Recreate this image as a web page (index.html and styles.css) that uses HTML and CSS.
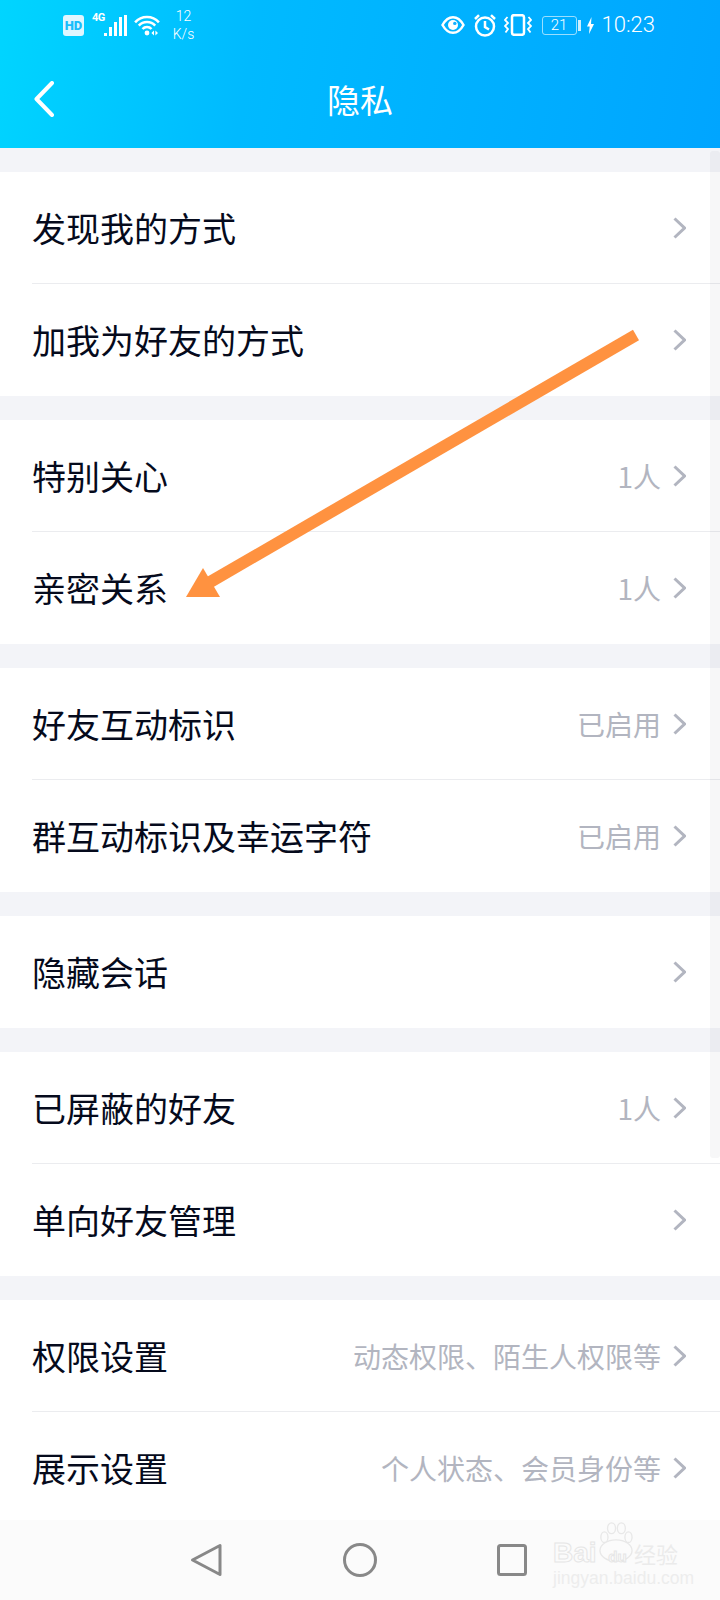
FILE: index.html
```html
<!DOCTYPE html>
<html lang="zh-CN">
<head>
  <meta charset="UTF-8">
  <title>隐私</title>
  <link rel="stylesheet" href="styles.css">
</head>
<body>
<div class="screen">

  <header class="top">
    <div class="status">
      <div class="status-left">
        <span class="hd">HD</span>
        <span class="net">4G</span>
        <svg class="signal" viewBox="0 0 23 21" width="23" height="21">
          <rect x="0" y="18" width="3" height="3"/>
          <rect x="5" y="12" width="3" height="9"/>
          <rect x="10" y="7" width="3" height="14"/>
          <rect x="15" y="2" width="3" height="19"/>
          <rect x="20" y="0" width="3" height="21"/>
        </svg>
        <svg class="wifi" viewBox="0 0 26 22" width="26" height="22">
          <path d="M1.1 8.3A16 16 0 0 1 24.9 8.3"/>
          <path d="M4.8 11.6A11 11 0 0 1 21.2 11.6"/>
          <path d="M8.5 15A6 6 0 0 1 17.5 15"/>
          <circle class="solid" cx="13" cy="19" r="2.4"/>
          <path class="solid" d="M20 16.5v5l-2.6-2.5zM21.4 16.5v5l2.6-2.5z"/>
        </svg>
        <span class="speed"><span>12</span><span>K/s</span></span>
      </div>
      <div class="status-right">
        <svg class="eye" viewBox="0 0 24 20" width="24" height="20">
          <path d="M1.5 10C4.5 4.6 8 2.2 12 2.2S19.500 4.600 22.500 10C19.500 15.400 16 17.800 12 17.800S4.500 15.400 1.500 10Z"/>
          <circle class="solid" cx="12" cy="10" r="5"/>
          <circle class="hole" cx="13.800" cy="8.400" r="1.700"/>
        </svg>
        <svg class="alarm" viewBox="0 0 24 24" width="24" height="24">
          <circle cx="12" cy="13.500" r="9"/>
          <path d="M12 8v6l4 2.500"/>
          <path d="M2 6 6 2.200M22 6 18 2.200"/>
        </svg>
        <svg class="vibrate" viewBox="0 0 28 22" width="28" height="22">
          <rect x="8" y="1.200" width="12" height="19.600" rx="2"/>
          <path class="thin" d="M3.500 3 1 6l3 3-3 3 3 3-2.500 3.500"/>
          <path class="thin" d="M24.500 3 27 6l-3 3 3 3-3 3 2.500 3.500"/>
        </svg>
        <span class="battery">21</span>
        <span class="battery-nub"></span>
        <svg class="bolt" viewBox="0 0 7 17" width="7" height="17">
          <path class="solid" d="M4.500 0 0 9.500h2.700L2 17l5-10H4z"/>
        </svg>
        <span class="clock">10:23</span>
      </div>
    </div>
    <div class="titlebar">
      <svg class="back" viewBox="0 0 20 36" width="20" height="36">
        <path d="M18 2 2.500 18 18 34"/>
      </svg>
      <h1>隐私</h1>
    </div>
  </header>

  <main class="list">
    <section class="group">
      <div class="row"><span class="label">发现我的方式</span><svg class="chev" viewBox="0 0 13 22"><path d="M1.500 1.500 11.500 11 1.500 20.500"/></svg></div>
      <div class="row"><span class="label">加我为好友的方式</span><svg class="chev" viewBox="0 0 13 22"><path d="M1.500 1.500 11.500 11 1.500 20.500"/></svg></div>
    </section>
    <section class="group">
      <div class="row"><span class="label">特别关心</span><span class="value">1人</span><svg class="chev" viewBox="0 0 13 22"><path d="M1.500 1.500 11.500 11 1.500 20.500"/></svg></div>
      <div class="row"><span class="label">亲密关系</span><span class="value">1人</span><svg class="chev" viewBox="0 0 13 22"><path d="M1.500 1.500 11.500 11 1.500 20.500"/></svg></div>
    </section>
    <section class="group">
      <div class="row"><span class="label">好友互动标识</span><span class="value">已启用</span><svg class="chev" viewBox="0 0 13 22"><path d="M1.500 1.500 11.500 11 1.500 20.500"/></svg></div>
      <div class="row"><span class="label">群互动标识及幸运字符</span><span class="value">已启用</span><svg class="chev" viewBox="0 0 13 22"><path d="M1.500 1.500 11.500 11 1.500 20.500"/></svg></div>
    </section>
    <section class="group">
      <div class="row"><span class="label">隐藏会话</span><svg class="chev" viewBox="0 0 13 22"><path d="M1.500 1.500 11.500 11 1.500 20.500"/></svg></div>
    </section>
    <section class="group">
      <div class="row"><span class="label">已屏蔽的好友</span><span class="value">1人</span><svg class="chev" viewBox="0 0 13 22"><path d="M1.500 1.500 11.500 11 1.500 20.500"/></svg></div>
      <div class="row"><span class="label">单向好友管理</span><svg class="chev" viewBox="0 0 13 22"><path d="M1.500 1.500 11.500 11 1.500 20.500"/></svg></div>
    </section>
    <section class="group">
      <div class="row"><span class="label">权限设置</span><span class="value">动态权限、陌生人权限等</span><svg class="chev" viewBox="0 0 13 22"><path d="M1.500 1.500 11.500 11 1.500 20.500"/></svg></div>
      <div class="row"><span class="label">展示设置</span><span class="value">个人状态、会员身份等</span><svg class="chev" viewBox="0 0 13 22"><path d="M1.500 1.500 11.500 11 1.500 20.500"/></svg></div>
    </section>
  </main>

  <nav class="navbar">
    <svg viewBox="0 0 34 34" width="34" height="34"><path d="M31 2.500V31.500L3.500 17Z"/></svg>
    <svg viewBox="0 0 34 34" width="34" height="34"><circle cx="17" cy="17" r="15.500"/></svg>
    <svg viewBox="0 0 34 34" width="34" height="34"><rect x="1.500" y="2.500" width="27" height="29" rx="2"/></svg>
  </nav>

  <div class="scrollbar"></div>

  <!-- orange annotation arrow drawn on top of the screenshot -->
  <svg class="arrow" viewBox="0 0 720 1600" width="720" height="1600">
    <line x1="636" y1="335" x2="205" y2="585"/>
    <polygon points="186,597 203,568 220,597"/>
  </svg>

  <div class="watermark">
    <svg class="paw" viewBox="0 0 40 46" width="36" height="41">
      <ellipse cx="7" cy="17" rx="4" ry="6"/>
      <ellipse cx="15" cy="7" rx="4.500" ry="6"/>
      <ellipse cx="26" cy="7" rx="4.500" ry="6"/>
      <ellipse cx="34" cy="17" rx="4" ry="6"/>
      <ellipse cx="20" cy="32" rx="18" ry="12"/>
    </svg>
    <div class="wm-brand"><span class="wm-bai">Bai</span><span class="wm-du">du</span><span class="wm-cn">经验</span></div>
    <div class="wm-url">jingyan.baidu.com</div>
  </div>

</div>
</body>
</html>
```

FILE: styles.css
```css
* {
  box-sizing: border-box;
}

html, body {
  margin: 0;
  padding: 0;
}

body {
  font-family: "Noto Sans CJK SC", "Noto Sans", sans-serif;
  background-color: #f3f4f8;
}

.screen {
  position: relative;
  width: 720px;
  height: 1600px;
  display: flex;
  flex-direction: column;
  overflow: hidden;
}

/* header */
.top {
  height: 148px;
  flex: none;
  color: #fff;
  background: linear-gradient(100deg, #00d5ff 0%, #00baff 35%, #00a5ff 100%);
}

.status {
  height: 50px;
  display: flex;
  justify-content: space-between;
  align-items: center;
  padding: 0 65px 0 63px;
  font-family: Roboto, sans-serif;
}

.status svg path,
.status svg circle,
.status svg rect {
  fill: none;
  stroke: #fff;
  stroke-width: 2.5;
}

.status svg .solid,
.status .signal rect {
  fill: #fff;
  stroke: none;
}

.status svg .hole {
  fill: #14b0ff;
  stroke: none;
}

.status svg .thin {
  stroke-width: 1.800;
}

.status-left,
.status-right {
  display: flex;
  align-items: center;
}

.hd {
  width: 21px;
  height: 21px;
  border-radius: 3px;
  margin-right: 8px;
  background-color: #dff6ff;
  color: #18bdfb;
  font-size: 13px;
  font-weight: 900;
  line-height: 21px;
  text-align: center;
}

.net {
  width: 12px;
  margin-bottom: 14px;
  font-size: 11px;
  font-weight: 700;
  line-height: 10px;
  letter-spacing: -0.5px;
}

.signal {
  margin-right: 7px;
  margin-top: 1px;
}

.wifi {
  margin-right: 12px;
}

.speed {
  width: 23px;
  display: flex;
  flex-direction: column;
  align-items: center;
  font-size: 14px;
  font-weight: 300;
  line-height: 18px;
  white-space: nowrap;
}

.eye {
  margin-right: 8px;
}

.alarm {
  margin-right: 7px;
}

.vibrate {
  margin-right: 10px;
}

.battery {
  width: 35px;
  height: 19px;
  border: 1px solid rgba(255, 255, 255, 0.6);
  border-radius: 3px;
  font-size: 15px;
  font-weight: 300;
  line-height: 17px;
  text-align: center;
}

.battery-nub {
  width: 3px;
  height: 11px;
  margin-left: 1px;
  margin-right: 6px;
  background-color: rgba(255, 255, 255, 0.8);
}

.bolt {
  margin-right: 8px;
}

.clock {
  font-size: 22px;
  font-weight: 300;
  line-height: 24px;
}

.titlebar {
  height: 98px;
  display: grid;
  grid-template-columns: 1fr auto 1fr;
  align-items: center;
  padding: 0 34px;
}

.back {
  fill: none;
  stroke: #fff;
  stroke-width: 4;
  stroke-linecap: round;
  stroke-linejoin: round;
}

h1 {
  grid-column: 2;
  margin: 0;
  font-size: 33px;
  font-weight: 400;
  line-height: 40px;
}

/* settings list */
.list {
  flex: 1;
  min-height: 0;
  overflow: hidden;
  padding-top: 24px;
}

.group {
  margin-bottom: 24px;
  background-color: #fff;
}

.row {
  height: 112px;
  margin-left: 32px;
  padding-right: 34px;
  display: flex;
  align-items: center;
  border-bottom: 1px solid #ebecef;
}

.row:last-child {
  border-bottom: none;
}

.label {
  flex: 1;
  color: #050a1c;
  font-size: 34px;
  line-height: 44px;
}

.value {
  margin-right: 12px;
  color: #b2b5c0;
  font-size: 28px;
  line-height: 40px;
}

.chev {
  width: 13px;
  height: 22px;
  flex: none;
  fill: none;
  stroke: #b2b5c0;
  stroke-width: 3;
}

/* bottom navigation */
.navbar {
  height: 80px;
  flex: none;
  display: flex;
  align-items: center;
  gap: 120px;
  padding-left: 189px;
  background-color: #fbfbfb;
}

.navbar svg {
  fill: none;
  stroke: #888;
  stroke-width: 3;
  stroke-linejoin: round;
}

/* overlays */
.scrollbar {
  position: absolute;
  top: 151px;
  right: 0;
  width: 10px;
  height: 1007px;
  border-radius: 3px;
  background-color: rgba(60, 60, 80, 0.04);
}

.arrow {
  position: absolute;
  top: 0;
  left: 0;
}

.arrow line {
  stroke: #ff9240;
  stroke-width: 12;
}

.arrow polygon {
  fill: #ff9240;
}

.watermark {
  position: absolute;
  top: 1522px;
  left: 553px;
  width: 130px;
  height: 62px;
  color: #ededed;
}

.paw {
  position: absolute;
  top: 0;
  left: 45px;
  fill: #fbfbfb;
  stroke: #e8e8e8;
  stroke-width: 1.500;
}

.wm-brand {
  position: absolute;
  top: 16px;
  left: 0;
  display: flex;
  align-items: center;
  white-space: nowrap;
}

.wm-bai {
  width: 48px;
  font-family: "Liberation Sans", sans-serif;
  font-size: 28px;
  font-weight: 700;
  line-height: 30px;
  color: #fbfbfb;
  -webkit-text-stroke: 1px #e6e6e6;
}

.wm-du {
  width: 33px;
  margin-top: 7px;
  font-family: "Liberation Sans", sans-serif;
  font-size: 15px;
  font-weight: 700;
  line-height: 20px;
  text-align: center;
  color: #fbfbfb;
  -webkit-text-stroke: 1px #e6e6e6;
}

.wm-cn {
  font-size: 22px;
  line-height: 30px;
  color: #ebebeb;
}

.wm-url {
  position: absolute;
  top: 46px;
  left: 0;
  font-family: "Liberation Sans", sans-serif;
  font-size: 17.500px;
  line-height: 20px;
  white-space: nowrap;
}
```
